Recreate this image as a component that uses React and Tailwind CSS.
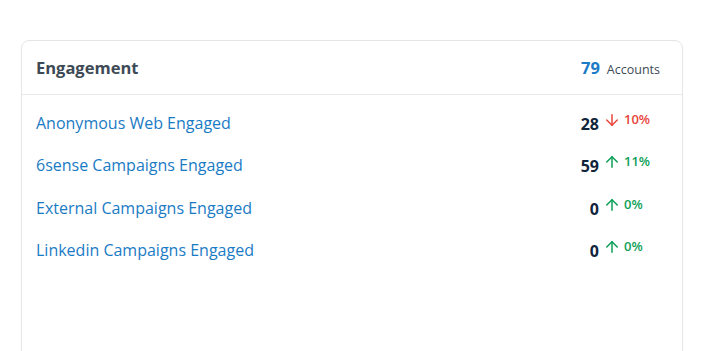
import React from 'react';
import { ArrowDown, ArrowUp } from 'lucide-react';

const rows = [
    { label: 'Anonymous Web Engaged', value: 28, change: '10%', up: false },
    { label: '6sense Campaigns Engaged', value: 59, change: '11%', up: true },
    { label: 'External Campaigns Engaged', value: 0, change: '0%', up: true },
    { label: 'Linkedin Campaigns Engaged', value: 0, change: '0%', up: true },
];

const App = () => {
    return (
        <div className="min-h-screen bg-white pt-10 px-[21px] font-['Open_Sans',sans-serif] overflow-hidden h-[351px]">
            <div className="w-[662px] h-[340px] bg-white border border-[#e3e5e8] rounded-lg">
                <div className="h-[54px] flex items-center justify-between pl-[14px] pr-[22px] pt-[2px] border-b border-[#e8eaec]">
                    <h2 className="text-[16.5px] font-bold text-[#3d4a56]">Engagement</h2>
                    <div className="flex items-baseline gap-[7px]">
                        <span className="text-[16.5px] font-bold text-[#1c7bc6]">79</span>
                        <span className="text-[12.5px] text-[#3d4a56]">Accounts</span>
                    </div>
                </div>
                <div className="pt-[16px] pl-[14px] pr-[30px] flex flex-col gap-[19.5px]">
                    {rows.map((r) => (
                        <div key={r.label} className="flex items-center justify-between h-[23px]">
                            <a className="text-[16px] text-[#1a7bc5]">{r.label}</a>
                            <div className="flex items-center">
                                <span className="text-[16px] font-bold text-[#10243a] mt-[2px]">{r.value}</span>
                                <div className={`w-[53px] flex items-center gap-[3px] pl-[4px] -mt-[6px] ${r.up ? 'text-[#0e9f58]' : 'text-[#e8453c]'}`}>
                                    {r.up ? <ArrowUp size={18} strokeWidth={2} /> : <ArrowDown size={18} strokeWidth={2} />}
                                    <span className="text-[13px] font-semibold">{r.change}</span>
                                </div>
                            </div>
                        </div>
                    ))}
                </div>
            </div>
        </div>
    );
};

export default App;
